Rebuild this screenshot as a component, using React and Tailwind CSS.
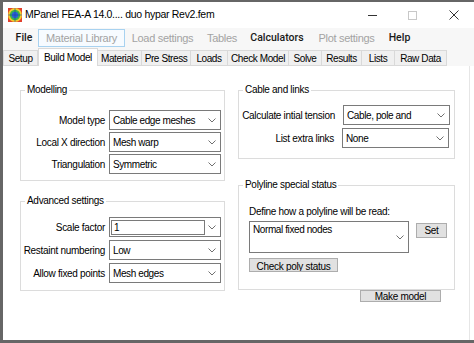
import React from "react";

const tabs = [
  { label: "Setup", w: "w-[35px]" },
  { label: "Build Model", w: "w-[60px]", active: true },
  { label: "Materials", w: "w-[45px]" },
  { label: "Pre Stress", w: "w-[50px]" },
  { label: "Loads", w: "w-[38px]" },
  { label: "Check Model", w: "w-[62px]" },
  { label: "Solve", w: "w-[34px]" },
  { label: "Results", w: "w-[41px]" },
  { label: "Lists", w: "w-[34px]" },
  { label: "Raw Data", w: "w-[53px]" },
];

const menu = [
  { label: "File", w: "w-[28px]", on: true },
  { label: "Material Library", w: "w-[87px]", hover: true },
  { label: "Load settings", w: "w-[75px]" },
  { label: "Tables", w: "w-[44px]" },
  { label: "Calculators", w: "w-[66px]", on: true },
  { label: "Plot settings", w: "w-[73px]" },
  { label: "Help", w: "w-[33px]", on: true },
];

function Chevron() {
  return (
    <svg width="8" height="5" viewBox="0 0 8 5" className="shrink-0">
      <polyline points="0.5,0.5 4,4 7.5,0.5" fill="none" stroke="#707070" strokeWidth="1" />
    </svg>
  );
}

function Combo({ value, w = "w-[112px]", editable }) {
  return (
    <div className={`${w} h-[20px] border border-[#7a7a7a] bg-white flex items-center shrink-0`}>
      {editable ? (
        <div className="ml-[1px] w-[94px] h-[15px] border border-[#7a7a7a] flex items-center pl-[2px] text-[10px] text-black">
          {value}
        </div>
      ) : (
        <div className="flex-1 pl-[3px] text-[10px] tracking-[-0.4px] text-black whitespace-nowrap overflow-hidden">
          {value}
        </div>
      )}
      <div className="ml-auto pr-[4px] flex items-center">
        <Chevron />
      </div>
    </div>
  );
}

function Row({ label, value, labelW = "w-[84px]", gap = "ml-[4px]", comboW, editable }) {
  return (
    <div className="flex items-center h-[20px]">
      <div className={`${labelW} text-right text-[10px] tracking-[-0.3px] text-black whitespace-nowrap`}>{label}</div>
      <div className={gap}>
        <Combo value={value} w={comboW} editable={editable} />
      </div>
    </div>
  );
}

function Group({ title, className = "", children }) {
  return (
    <fieldset className={`border border-[#dcdcdc] ${className}`}>
      <legend className="ml-[4px] px-[2px] text-[10px] leading-[14px] tracking-[-0.3px] text-black">{title}</legend>
      {children}
    </fieldset>
  );
}

function Btn({ children, className = "" }) {
  return (
    <div
      className={`bg-[#e1e1e1] border border-[#adadad] text-[10px] tracking-[-0.3px] text-black flex justify-center overflow-hidden whitespace-nowrap ${className}`}
    >
      {children}
    </div>
  );
}

export default function App() {
  return (
    <div className="w-[474px] h-[343px] flex flex-col overflow-hidden bg-white border-l-[3px] border-t-2 border-b-[3px] border-[#666] font-['Liberation_Sans',Arial,sans-serif]">
      {/* Title bar */}
      <div className="h-[26px] flex items-center bg-white shrink-0">
        <svg width="14" height="14" viewBox="0 0 14 14" className="ml-[5px]">
          <rect x="0" y="0" width="14" height="14" fill="#e2402c" />
          <circle cx="7" cy="7" r="7" fill="#f3cf2b" />
          <circle cx="7" cy="7" r="5.2" fill="#3db24b" />
          <circle cx="7" cy="7" r="3.2" fill="#2a62d8" />
          <path d="M0 7 H14 M7 0 V14" stroke="#1b3fa0" strokeWidth="0.6" />
        </svg>
        <span className="ml-[3px] text-[10.5px] tracking-[-0.3px] text-black whitespace-nowrap">
          MPanel FEA-A 14.0.... duo hypar Rev2.fem
        </span>
        <div className="ml-auto flex h-full">
          <div className="w-[40px] flex items-center justify-center">
            <div className="w-[9px] h-px bg-[#333]" />
          </div>
          <div className="w-[41px] flex items-center justify-center">
            <div className="w-[9px] h-[9px] border border-[#c8c8c8]" />
          </div>
          <div className="w-[41px] flex items-center justify-center">
            <svg width="10" height="10" viewBox="0 0 10 10">
              <path d="M0.5 0.5 L9.5 9.5 M9.5 0.5 L0.5 9.5" stroke="#333" strokeWidth="1" />
            </svg>
          </div>
        </div>
      </div>

      {/* Menu bar */}
      <div className="h-[20px] bg-[#f7f7f7] flex items-center pl-[7px] shrink-0">
        {menu.map((m) => (
          <div
            key={m.label}
            className={`${m.w} h-[18px] flex items-center justify-center whitespace-nowrap ${
              m.on
                ? "font-['Roboto',sans-serif] font-medium text-[10.5px] text-[#1a1a1a]"
                : "text-[11px] tracking-[-0.3px] text-[#a3a3a3]"
            } ${m.hover ? "border border-[#a8d2f0] bg-[#f7fbff]" : ""}`}
          >
            {m.label}
          </div>
        ))}
      </div>

      {/* Tabs */}
      <div className="h-[18px] bg-[#f7f7f7] flex items-end shrink-0">
        {tabs.map((t) =>
          t.active ? (
            <div
              key={t.label}
              className={`${t.w} h-[18px] bg-white border-t border-x border-[#d9d9d9] flex items-center justify-center text-[10px] tracking-[-0.4px] text-black whitespace-nowrap`}
            >
              {t.label}
            </div>
          ) : (
            <div
              key={t.label}
              className={`${t.w} h-[16px] bg-[#f0f0f0] border border-[#d9d9d9] -ml-px first:ml-0 flex items-center justify-center text-[10px] tracking-[-0.4px] text-black whitespace-nowrap`}
            >
              {t.label}
            </div>
          )
        )}
      </div>

      {/* Content */}
      <div className="flex-1 flex bg-white">
        <div className="flex-1 border-r border-[#e6e6e6] pl-[17px] pt-[17px] flex gap-[13px]">
          {/* Left column */}
          <div className="w-[205px] flex flex-col gap-[13px]">
            <Group title="Modelling">
              <div className="flex flex-col gap-[2px] pt-[13px] pb-[6px]">
                <Row label="Model type" value="Cable edge meshes" />
                <Row label="Local X direction" value="Mesh warp" />
                <Row label="Triangulation" value="Symmetric" />
              </div>
            </Group>
            <Group title="Advanced settings">
              <div className="flex flex-col gap-[3px] pt-[9px] pb-[7px]">
                <Row label="Scale factor" value="1" editable />
                <Row label="Restaint numbering" value="Low" />
                <Row label="Allow fixed points" value="Mesh edges" />
              </div>
            </Group>
          </div>

          {/* Right column */}
          <div className="w-[217px] flex flex-col">
            <Group title="Cable and links">
              <div className="flex flex-col gap-[3px] pt-[8px] pb-[10px]">
                <Row label="Calculate intial tension" value="Cable, pole and" labelW="w-[96px]" gap="ml-[8px]" comboW="w-[107px]" />
                <Row label="List extra links" value="None" labelW="w-[95px]" gap="ml-[8px]" comboW="w-[107px]" />
              </div>
            </Group>
            <Group title="Polyline special status" className="mt-[19px]">
              <div className="pl-[10px] pt-[14px] pb-[17px]">
                <div className="text-[10px] leading-[12px] tracking-[-0.3px] text-black whitespace-nowrap">
                  Define how a polyline will be read:
                </div>
                <div className="flex items-start mt-[3px]">
                  <div className="w-[160px] h-[32px] border border-[#7a7a7a] bg-white flex">
                    <div className="flex-1 pl-[3px] pt-[2px] text-[10px] leading-[12px] tracking-[-0.4px] text-black whitespace-nowrap">
                      Normal fixed nodes
                    </div>
                    <div className="flex items-center pr-[4px]">
                      <Chevron />
                    </div>
                  </div>
                  <Btn className="ml-[7px] mt-[2px] w-[31px] h-[15px] items-center">Set</Btn>
                </div>
                <Btn className="mt-[5px] w-[89px] h-[14px] leading-[14px] pt-[1px]">Check poly status</Btn>
              </div>
            </Group>
            <Btn className="self-end mr-[14px] w-[81px] h-[12px] leading-[12px]">Make model</Btn>
          </div>
        </div>
        <div className="w-[4px]" />
      </div>
    </div>
  );
}
